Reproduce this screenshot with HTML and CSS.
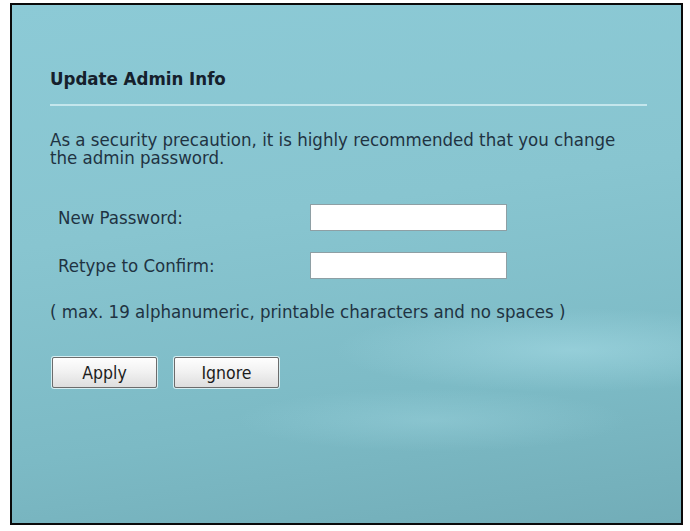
FILE: index.html
```html
<!DOCTYPE html>
<html lang="en">
<head>
<meta charset="utf-8">
<title>Update Admin Info</title>
<link rel="stylesheet" href="styles.css">
</head>
<body>
<div class="panel">
  <h1 class="title">Update Admin Info</h1>
  <div class="rule"></div>
  <p class="intro">As a security precaution, it is highly recommended that you change the admin password.</p>
  <div class="fields">
    <label class="label" for="pw1">New Password:</label>
    <input class="field" id="pw1" type="password">
    <label class="label" for="pw2">Retype to Confirm:</label>
    <input class="field" id="pw2" type="password">
  </div>
  <p class="note">( max. 19 alphanumeric, printable characters and no spaces )</p>
  <div class="actions">
    <button class="btn" type="button">Apply</button>
    <button class="btn" type="button">Ignore</button>
  </div>
</div>
</body>
</html>
```

FILE: styles.css
```css
html, body {
  margin: 0;
  padding: 0;
  background: #ffffff;
}

body {
  font-family: "DejaVu Sans Condensed", "DejaVu Sans", sans-serif;
  color: #1f3342;
}

.panel {
  box-sizing: border-box;
  width: 673px;
  height: 522px;
  margin: 3px 0 0 10px;
  border: 2px solid #0a0a0a;
  padding: 63px 34px 0 38px;
  background:
    radial-gradient(ellipse 340px 60px at 560px 345px, rgba(172, 224, 234, 0.5), rgba(172, 224, 234, 0) 70%),
    radial-gradient(ellipse 280px 45px at 420px 415px, rgba(165, 218, 228, 0.35), rgba(165, 218, 228, 0) 70%),
    linear-gradient(172deg, #8ccad6 0%, #88c5d0 40%, #7cbac5 75%, #72adb8 100%);
}

.title {
  margin: 0;
  font-size: 18.5px;
  font-weight: bold;
  line-height: 22px;
  color: #15202c;
}

.rule {
  height: 2px;
  margin-top: 14px;
  background: #c4e6ec;
}

.intro {
  margin: 25px 0 0;
  font-size: 18.5px;
  line-height: 18px;
}

.fields {
  display: grid;
  grid-template-columns: 260px 197px;
  grid-auto-rows: 27px;
  row-gap: 21px;
  align-items: center;
  margin-top: 37px;
}

.label {
  padding-left: 8px;
  font-size: 18.5px;
}

.field {
  box-sizing: border-box;
  width: 197px;
  height: 27px;
  margin: 0;
  border: 1px solid #8e9fa4;
  background: #ffffff;
}

.note {
  margin: 22px 0 0;
  font-size: 18.5px;
  line-height: 22px;
}

.actions {
  display: flex;
  gap: 17px;
  margin-top: 34px;
  padding-left: 2px;
}

.btn {
  box-sizing: border-box;
  width: 105px;
  height: 31px;
  padding: 0;
  border: 1px solid #6c6c6c;
  border-radius: 2px;
  box-shadow: 0 0 0 1px #d6eef2;
  background: linear-gradient(#fefefe 0%, #f2f2f2 45%, #dedede 100%);
  font-family: "DejaVu Sans Condensed", "DejaVu Sans", sans-serif;
  font-size: 17.5px;
  color: #1c1c1c;
}
```
